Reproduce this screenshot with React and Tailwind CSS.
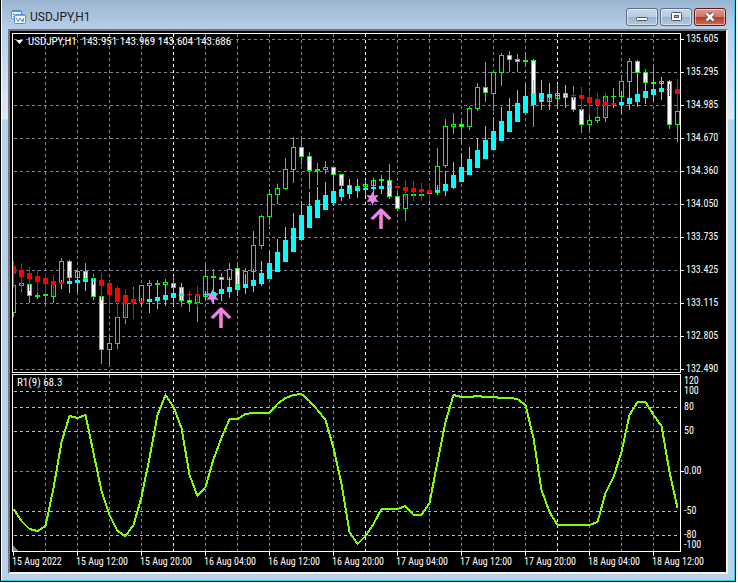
import React from "react";

const BAR_STEP = 8;
const FIRST_BAR_X = 13;

// Each bar: candle [high, bodyTop, bodyBottom, low, kind] then trend candle
// [high, bodyTop, bodyBottom, low, bodyColour, wickColour].
// kind: "u" hollow, "d" filled. Colours: "r" red, "c" aqua.
const BARS = [
  [285, 285, 312, 316, "u", 261, 266, 273, 287, "r", "r"],
  [283, 283, 285, 291, "u", 264, 270, 276, 289, "r", "r"],
  [284, 284, 295, 302, "d", 267, 273, 278, 290, "r", "r"],
  [293, 295, 296, 298, "u", 270, 276, 281, 292, "r", "r"],
  [294, 294, 295, 302, "u", 273, 278, 283, 293, "r", "r"],
  [284, 284, 296, 302, "u", 275, 281, 284, 295, "r", "r"],
  [258, 261, 283, 283, "u", 280, 282, 283, 288, "r", "c"],
  [260, 261, 277, 277, "d", 271, 281, 283, 292, "c", "c"],
  [271, 271, 277, 277, "u", 270, 280, 282, 291, "c", "c"],
  [263, 271, 278, 278, "d", 269, 279, 281, 290, "c", "c"],
  [274, 278, 296, 299, "d", 276, 280, 280, 284, "c", "r"],
  [296, 296, 349, 363, "d", 273, 280, 285, 299, "r", "r"],
  [334, 343, 349, 364, "u", 281, 283, 294, 310, "r", "r"],
  [317, 317, 343, 348, "u", 286, 288, 301, 317, "r", "r"],
  [303, 303, 317, 323, "u", 289, 295, 303, 319, "r", "r"],
  [287, 300, 301, 301, "u", 289, 299, 302, 318, "r", "r"],
  [285, 285, 301, 301, "u", 298, 301, 302, 306, "r", "c"],
  [280, 283, 285, 285, "u", 286, 299, 301, 312, "c", "c"],
  [280, 283, 284, 284, "u", 285, 297, 300, 308, "c", "c"],
  [279, 282, 284, 284, "u", 285, 295, 299, 305, "c", "c"],
  [276, 283, 287, 287, "d", 284, 293, 297, 305, "c", "c"],
  [287, 287, 300, 306, "d", 283, 293, 295, 300, "c", "c"],
  [298, 300, 302, 311, "d", 291, 294, 294, 298, "r", "r"],
  [295, 295, 302, 321, "u", 286, 294, 295, 306, "r", "r"],
  [264, 276, 296, 296, "u", 291, 294, 294, 299, "c", "c"],
  [269, 276, 277, 281, "u", 281, 292, 294, 303, "c", "c"],
  [273, 277, 279, 279, "d", 280, 289, 293, 300, "c", "c"],
  [263, 269, 279, 279, "u", 277, 287, 291, 297, "c", "c"],
  [264, 268, 284, 284, "d", 275, 285, 289, 295, "c", "c"],
  [268, 271, 284, 284, "u", 274, 284, 287, 293, "c", "c"],
  [231, 245, 271, 271, "u", 269, 280, 285, 291, "c", "c"],
  [215, 216, 245, 248, "u", 261, 273, 283, 285, "c", "c"],
  [189, 194, 216, 224, "u", 250, 263, 278, 278, "c", "c"],
  [184, 188, 194, 203, "u", 239, 252, 271, 271, "c", "c"],
  [158, 169, 188, 189, "u", 227, 240, 261, 261, "c", "c"],
  [137, 147, 169, 182, "u", 213, 228, 251, 251, "c", "c"],
  [139, 147, 156, 164, "d", 201, 215, 239, 239, "c", "c"],
  [152, 156, 170, 188, "d", 192, 206, 227, 227, "c", "c"],
  [163, 169, 170, 184, "u", 187, 200, 217, 217, "c", "c"],
  [161, 167, 169, 173, "u", 182, 195, 209, 209, "c", "c"],
  [167, 167, 174, 176, "d", 176, 191, 202, 205, "c", "c"],
  [174, 174, 185, 185, "d", 178, 189, 196, 200, "c", "c"],
  [185, 185, 188, 188, "d", 179, 188, 193, 198, "c", "c"],
  [186, 186, 187, 187, "u", 179, 188, 190, 197, "c", "c"],
  [184, 184, 186, 186, "u", 180, 188, 189, 195, "c", "c"],
  [178, 180, 185, 185, "u", 180, 187, 188, 195, "c", "c"],
  [175, 179, 180, 180, "u", 180, 186, 188, 193, "c", "c"],
  [164, 180, 196, 198, "d", 177, 185, 187, 193, "c", "c"],
  [188, 196, 208, 210, "d", 183, 186, 187, 190, "r", "r"],
  [194, 194, 208, 220, "u", 180, 187, 190, 199, "r", "r"],
  [194, 194, 195, 195, "u", 181, 188, 191, 200, "r", "r"],
  [194, 194, 195, 195, "u", 183, 189, 191, 200, "r", "r"],
  [192, 192, 193, 203, "u", 183, 190, 192, 200, "r", "r"],
  [148, 166, 192, 192, "u", 185, 190, 191, 194, "c", "c"],
  [119, 126, 165, 167, "u", 171, 184, 190, 195, "c", "c"],
  [113, 124, 126, 133, "u", 162, 175, 187, 188, "c", "c"],
  [118, 124, 126, 143, "d", 153, 167, 181, 181, "c", "c"],
  [106, 108, 126, 129, "u", 147, 159, 174, 174, "c", "c"],
  [83, 87, 108, 110, "u", 138, 150, 167, 167, "c", "c"],
  [62, 87, 92, 101, "d", 126, 140, 158, 158, "c", "c"],
  [72, 72, 93, 110, "u", 117, 131, 149, 149, "c", "c"],
  [53, 55, 72, 85, "u", 107, 121, 140, 140, "c", "c"],
  [51, 55, 59, 71, "d", 98, 111, 131, 131, "c", "c"],
  [54, 59, 61, 71, "d", 90, 103, 121, 121, "c", "c"],
  [53, 60, 61, 66, "u", 84, 96, 112, 112, "c", "c"],
  [59, 60, 98, 126, "d", 80, 93, 104, 109, "c", "c"],
  [99, 99, 101, 101, "d", 80, 93, 98, 109, "c", "c"],
  [97, 97, 101, 101, "u", 83, 94, 96, 109, "c", "c"],
  [93, 93, 98, 98, "u", 84, 95, 95, 108, "c", "c"],
  [93, 93, 97, 97, "d", 85, 95, 95, 107, "c", "c"],
  [86, 97, 109, 111, "d", 92, 95, 95, 99, "r", "r"],
  [109, 109, 124, 132, "d", 87, 95, 98, 110, "r", "r"],
  [113, 120, 124, 130, "u", 90, 97, 102, 113, "r", "r"],
  [116, 117, 120, 122, "u", 93, 99, 104, 115, "r", "r"],
  [96, 96, 117, 121, "u", 93, 102, 105, 115, "r", "r"],
  [88, 96, 96, 102, "u", 101, 103, 104, 107, "r", "c"],
  [75, 81, 96, 96, "u", 91, 102, 104, 113, "c", "c"],
  [58, 61, 81, 81, "u", 82, 98, 103, 109, "c", "c"],
  [60, 61, 72, 72, "d", 73, 94, 101, 106, "c", "c"],
  [69, 72, 82, 82, "d", 79, 91, 97, 103, "c", "c"],
  [67, 82, 83, 83, "u", 78, 89, 94, 100, "c", "c"],
  [81, 81, 83, 83, "u", 77, 88, 91, 99, "c", "c"],
  [80, 81, 124, 128, "d", 84, 89, 89, 95, "c", "r"],
  [111, 111, 124, 141, "u", 79, 89, 93, 110, "r", "r"],
];

const R1 = [
  509, 521, 529, 531, 526, 488, 442, 416, 418, 415, 453, 491, 515, 531, 536, 525,
  497, 458, 415, 395, 407, 428, 475, 496, 487, 459, 438, 419, 419, 414, 413, 413,
  413, 404, 398, 395, 394, 401, 410, 420, 448, 484, 532, 544, 536, 524, 509, 509,
  509, 506, 515, 515, 503, 462, 422, 395, 397, 397, 396, 397, 397, 398, 398, 399,
  405, 438, 490, 512, 525, 525, 525, 525, 525, 522, 493, 477, 452, 415, 402, 402,
  415, 426, 472, 508,
];

const PRICES = [
  "135.605", "135.295", "134.985", "134.670", "134.360", "134.050",
  "133.735", "133.425", "133.115", "132.805", "132.490",
];

const LEVELS = [
  { label: "120", height: 10 },
  { label: "100", height: 16 },
  { label: "80", height: 24 },
  { label: "50", height: 40 },
  { label: "0.00", height: 40, tick: true },
  { label: "-50", height: 24 },
  { label: "-80", height: 10 },
  { label: "-100", height: 10 },
];

const TIMES = [
  "15 Aug 2022", "15 Aug 12:00", "15 Aug 20:00", "16 Aug 04:00",
  "16 Aug 12:00", "16 Aug 20:00", "17 Aug 04:00", "17 Aug 12:00",
  "17 Aug 20:00", "18 Aug 04:00", "18 Aug 12:00",
];

const GRID_X = Array.from({ length: 20 }, (_, i) => 45 + i * 32);
const DAY_X = [173, 365, 557];
const DASH = "3 3";
const COLOURS = { r: "#ff0000", c: "#00ffff" };
const barX = (i) => FIRST_BAR_X + i * BAR_STEP;

function VerticalGrid({ top, bottom }) {
  return GRID_X.map((x) => (
    <line
      key={x}
      x1={x + 0.5}
      x2={x + 0.5}
      y1={top}
      y2={bottom}
      stroke={DAY_X.includes(x) ? "#ffffff" : "#778899"}
      strokeDasharray={DASH}
    />
  ));
}

function HorizontalLine({ y, colour }) {
  return (
    <line x1="14" x2="680" y1={y + 0.5} y2={y + 0.5} stroke={colour} strokeDasharray={DASH} />
  );
}

function Candle({ x, bar }) {
  const [high, top, bottom, low, kind] = bar;
  return (
    <g fill="#00ff00">
      <rect x={x} y={high} width="1" height={low - high + 1} />
      <rect x={x - 2} y={top} width="5" height={bottom - top + 1} />
      {bottom - top > 1 && (
        <rect
          x={x - 1}
          y={top + 1}
          width="3"
          height={bottom - top - 1}
          fill={kind === "d" ? "#ffffff" : "#000000"}
        />
      )}
    </g>
  );
}

function TrendCandle({ x, bar }) {
  const [high, top, bottom, low, body, wick] = bar.slice(5);
  return (
    <g>
      <rect x={x} y={high} width="1" height={low - high + 1} fill={COLOURS[wick]} />
      <rect x={x - 2} y={top} width="5" height={bottom - top + 1} fill={COLOURS[body]} />
    </g>
  );
}

function Star({ x, y }) {
  const points = Array.from({ length: 12 }, (_, i) => {
    const r = i % 2 ? 3.4 : 7;
    const a = (i * Math.PI) / 6 - Math.PI / 2;
    return `${x + r * Math.cos(a)},${y + r * Math.sin(a)}`;
  }).join(" ");
  return <polygon points={points} fill="#ee82ee" />;
}

function Arrow({ x, y }) {
  const d = `M${x} ${y + 21}V${y + 2}M${x - 9} ${y + 11}L${x} ${y + 2}L${x + 9} ${y + 11}`;
  return (
    <g fill="none" strokeWidth="2">
      <path d={d} stroke="#5a50d8" transform="translate(-1 0)" />
      <path d={d} stroke="#a84a20" transform="translate(1 0)" />
      <path d={d} stroke="#ee82ee" strokeWidth="3" />
    </g>
  );
}

function PriceChart() {
  return (
    <svg className="block h-full w-full" shapeRendering="crispEdges" role="img" aria-label="USDJPY hourly candles">
      <g transform="translate(-13 -34)">
        <VerticalGrid top={34} bottom={372} />
        {PRICES.map((p, i) => (
          <HorizontalLine key={p} y={39 + i * 33} colour="#778899" />
        ))}
        {BARS.map((bar, i) => (
          <Candle key={i} x={barX(i)} bar={bar} />
        ))}
        <g shapeRendering="auto">
          <Star x={212.5} y={296.5} />
          <Star x={372.5} y={198.5} />
          <Arrow x={221} y={307} />
          <Arrow x={381} y={208} />
        </g>
        {BARS.map((bar, i) => (
          <TrendCandle key={i} x={barX(i)} bar={bar} />
        ))}
      </g>
    </svg>
  );
}

function OscillatorChart() {
  const points = R1.map((y, i) => `${barX(i) + 0.5},${y}`).join(" ");
  return (
    <svg className="block h-full w-full" shapeRendering="crispEdges" role="img" aria-label="R1 oscillator">
      <g transform="translate(-13 -375)">
        <VerticalGrid top={375} bottom={551} />
        <HorizontalLine y={471} colour="#778899" />
        {[391, 407, 431, 511, 535].map((y) => (
          <HorizontalLine key={y} y={y} colour="#c0c0c0" />
        ))}
        <polyline points={points} fill="none" stroke="#7fff00" strokeWidth="2" />
        <path d="M13 546l5 5h-5z" fill="#778899" />
      </g>
    </svg>
  );
}

function AppIcon() {
  return (
    <svg className="mt-1 size-4 shrink-0" viewBox="0 0 16 16" fill="none" aria-hidden="true">
      <rect x="0.500" y="1.500" width="10" height="8" rx="1" fill="#f4f9ff" stroke="#4a8fe0" />
      <path d="M1 2.500h10" stroke="#4a8fe0" />
      <path d="M2.500 4v4" stroke="#4a8fe0" strokeDasharray="2 1" />
      <rect x="3.500" y="5.500" width="11" height="9" rx="1" fill="#f4f9ff" stroke="#4a8fe0" />
      <path d="M4 6.500h10" stroke="#6ba6ea" />
      <path d="M5 8.500l2 4 2-3.500 2 3.500 1.500-3v3" stroke="#4a8fe0" />
    </svg>
  );
}

const BUTTON =
  "flex h-[18px] w-8 items-center justify-center rounded-[3px] border shadow-[inset_0_0_0_1px_rgba(255,255,255,0.5)]";
const PLAIN =
  "border-[#5c6f88] bg-[linear-gradient(#c8d8ea_0%,#b8cbe0_48%,#9cb3cc_50%,#b4cae2_100%)]";
const CLOSE =
  "border-[#5b1a1a] bg-[linear-gradient(#dc9a8c_0%,#cf7565_48%,#b83a26_50%,#cc6a50_100%)]";

function TitleBar() {
  return (
    <header className="flex h-[29px] items-center bg-linear-to-b from-[#9ab4d0] to-[#b8d0e9] pr-2 pl-[9px]">
      <AppIcon />
      <h1 className="ml-[3px] flex-1 pt-1 font-[Roboto,sans-serif] text-[12px] leading-4 text-[#1c1c24]">
        USDJPY,H1
      </h1>
      <div className="flex gap-0.5 pt-1">
        <button className={`${BUTTON} ${PLAIN}`} aria-label="Minimize">
          <svg className="h-4 w-4" viewBox="0 0 16 16" aria-hidden="true">
            <rect x="2.500" y="8.500" width="11" height="3" rx="1" fill="#fff" stroke="#4c5564" />
          </svg>
        </button>
        <button className={`${BUTTON} ${PLAIN}`} aria-label="Maximize">
          <svg className="h-4 w-4" viewBox="0 0 16 16" aria-hidden="true">
            <rect x="3.500" y="3.500" width="10" height="8" rx="1" fill="#fff" stroke="#4c5564" />
            <rect x="6.500" y="6.500" width="4" height="2" fill="#9cb3cc" stroke="#4c5564" />
          </svg>
        </button>
        <button className={`${BUTTON} ${CLOSE}`} aria-label="Close">
          <svg className="h-4 w-4" viewBox="0 0 16 16" aria-hidden="true">
            <path d="M4.500 4.500l7 7M11.500 4.500l-7 7" stroke="#4c4450" strokeWidth="4.500" />
            <path d="M4.500 4.500l7 7M11.500 4.500l-7 7" stroke="#fff" strokeWidth="2.500" />
          </svg>
        </button>
      </div>
    </header>
  );
}

export default function App() {
  return (
    <div className="bg-white pr-0.5 pb-px">
      <div className="border-x border-b border-black bg-[#bad1ea]">
        <div className="border-r border-b border-l border-r-[#30c8e0] border-b-[#30c8e0] border-l-white bg-[linear-gradient(#9ab4d0_0px,#b8d0e9_29px,#dfe9f5_119px,#bad1ea_120px)]">
          <TitleBar />
          <div className="px-1.5 pb-1.5">
            <main className="border-2 border-t-[#70747c] border-r-[#f0f0f0] border-b-[#f4f2ee] border-l-[#77767a] bg-black pt-0.5 pl-0.5 font-['Roboto_Condensed','DejaVu_Sans_Condensed',sans-serif] text-[10px] leading-3 text-white">
              <div className="flex">
                <div className="flex min-w-0 flex-1 flex-col gap-px">
                  <section className="relative h-[340px] border border-white">
                    <PriceChart />
                    <h2 className="absolute top-0.5 left-[3px] flex items-center gap-[5px] text-[11px] whitespace-pre">
                      <svg className="h-1 w-[7px]" viewBox="0 0 7 4" aria-hidden="true">
                        <path d="M0 0h7L3.500 4z" fill="#fff" />
                      </svg>
                      USDJPY,H1{"  "}143.951 143.969 143.604 143.686
                    </h2>
                  </section>
                  <section className="relative h-[178px] border border-white">
                    <OscillatorChart />
                    <h2 className="absolute top-0.5 left-1 text-[11px]">R1(9) 68.3</h2>
                  </section>
                </div>
                <div className="w-[45px] shrink-0">
                  <ul className="flex h-[342px] flex-col justify-between">
                    {PRICES.map((p) => (
                      <li key={p} className="flex items-center gap-0.5">
                        <span className="h-px w-[3px] bg-white" />
                        {p}
                      </li>
                    ))}
                  </ul>
                  <ul className="pt-px">
                    {LEVELS.map((l) => (
                      <li key={l.label} className="flex items-start" style={{ height: l.height }}>
                        <span className="flex items-center leading-[10px]">
                          <span className={l.tick ? "h-px w-[3px] bg-white" : "h-px w-[3px]"} />
                          {l.label}
                        </span>
                      </li>
                    ))}
                  </ul>
                </div>
              </div>
              <ol className="flex h-5 overflow-hidden">
                {TIMES.map((t) => (
                  <li key={t} className="w-16 shrink-0 whitespace-nowrap">
                    <div className="ml-px h-1 w-px bg-white" />
                    {t}
                  </li>
                ))}
              </ol>
            </main>
          </div>
        </div>
      </div>
    </div>
  );
}
